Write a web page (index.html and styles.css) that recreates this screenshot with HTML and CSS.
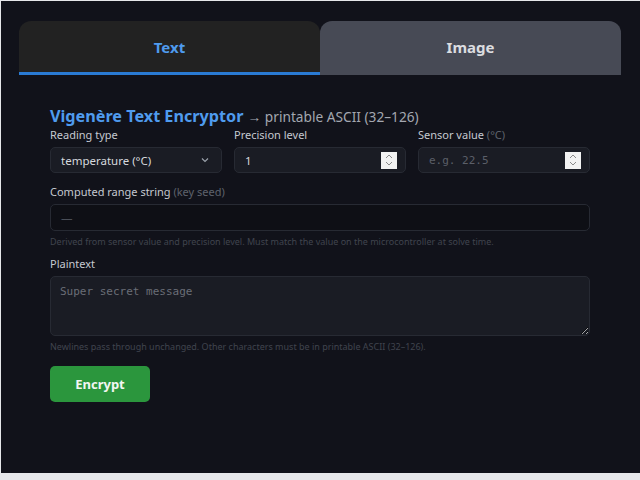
FILE: index.html
```html
<!DOCTYPE html>
<html lang="en">
<head>
  <meta charset="UTF-8">
  <meta name="viewport" content="width=device-width, initial-scale=1.0">
  <title>Vigenère Encryptor</title>
  <link rel="stylesheet" href="styles.css">
</head>
<body>

<div class="frame">
  <div class="tabs">
    <div class="tab active">Text</div>
    <div class="tab">Image</div>
  </div>

  <div class="panel">
    <h2 class="title">Vigenère Text Encryptor <span class="sub">→ printable ASCII (32–126)</span></h2>

    <div class="row">
      <div class="field">
        <label>Reading type</label>
        <div class="box">
          <span class="val">temperature (°C)</span>
          <svg class="chev" width="8" height="6" viewBox="0 0 8 6"><path d="M1 1.5 L4 4.5 L7 1.5" fill="none" stroke="#9aa0aa" stroke-width="1.2"/></svg>
        </div>
      </div>
      <div class="field">
        <label>Precision level</label>
        <div class="box">
          <span class="val">1</span>
          <span class="spin">
            <svg width="10" height="14" viewBox="0 0 10 14"><path d="M2 5 L5 2 L8 5 M2 9 L5 12 L8 9" fill="none" stroke="#8a8a8a" stroke-width="1"/></svg>
          </span>
        </div>
      </div>
      <div class="field">
        <label>Sensor value <span class="dim">(°C)</span></label>
        <div class="box">
          <span class="val mono ph">e.g. 22.5</span>
          <span class="spin">
            <svg width="10" height="14" viewBox="0 0 10 14"><path d="M2 5 L5 2 L8 5 M2 9 L5 12 L8 9" fill="none" stroke="#8a8a8a" stroke-width="1"/></svg>
          </span>
        </div>
      </div>
    </div>

    <div class="field wide">
      <label>Computed range string <span class="dim">(key seed)</span></label>
      <div class="box dark"><span class="val ph2">—</span></div>
      <p class="hint">Derived from sensor value and precision level. Must match the value on the microcontroller at solve time.</p>
    </div>

    <div class="field wide plain">
      <label>Plaintext</label>
      <textarea class="area" placeholder="Super secret message"></textarea>
      <p class="hint">Newlines pass through unchanged. Other characters must be in printable ASCII (32–126).</p>
    </div>

    <button class="btn">Encrypt</button>
  </div>
</div>

</body>
</html>
```

FILE: styles.css
```css
html {
  background: #e6e7ea;
}

body {
  margin: 0;
  font-family: "Noto Sans", sans-serif;
}

.frame {
  margin: 1px 0 0 1px;
  height: 452px;
  padding: 20px 19px 0 18px;
  background: #11121a;
}

.tabs {
  display: flex;
  height: 51px;
  border-bottom: 3px solid #2b2d35;
}

.tab {
  flex: 1;
  display: flex;
  justify-content: center;
  align-items: center;
  font-size: 15px;
  font-weight: bold;
  color: #dcdde0;
  background: #474a55;
  border-radius: 12px 12px 0 0;
  margin-bottom: -3px;
  border-bottom: 3px solid transparent;
  padding-top: 1px;
}

.tab.active {
  background: #222222;
  color: #4f9bee;
  border-bottom-color: #2a7bd4;
}

.panel {
  padding: 33px 31px 0 31px;
}

.title {
  margin: 0;
  font-size: 16.2px;
  font-weight: bold;
  color: #4f9bee;
  line-height: 17px;
}

.sub {
  font-size: 13.7px;
  font-weight: normal;
  color: #a3a7b0;
}

.row {
  display: grid;
  grid-template-columns: 1fr 1fr 1fr;
  column-gap: 12px;
  margin-top: 3px;
}

.field {
  display: flex;
  flex-direction: column;
}

label {
  font-size: 11px;
  color: #c5c9d1;
  line-height: 14px;
  margin-bottom: 5px;
}

.dim {
  color: #5e626c;
}

.box {
  display: flex;
  align-items: center;
  height: 24px;
  padding: 0 10px;
  background: #1a1c24;
  border: 1px solid #272a33;
  border-radius: 5px;
}

.box.dark {
  background: #0e0f15;
  height: 25px;
}

.val {
  flex: 1;
  font-size: 11.5px;
  color: #d6d9de;
}

.mono {
  font-family: "DejaVu Sans Mono", monospace;
}

.ph {
  color: #5b5f68;
  font-size: 11px;
}

.ph2 {
  color: #4a4e57;
}

.chev {
  margin-right: 2px;
}

.spin {
  display: flex;
  justify-content: center;
  align-items: center;
  width: 16px;
  height: 17px;
  background: #f2f2f2;
  margin-right: -2px;
}

.wide {
  margin-top: 12px;
}

.wide.plain {
  margin-top: 9px;
}

.hint {
  margin: 5px 0 0 0;
  font-size: 9px;
  color: #40444e;
  line-height: 12px;
}

.area {
  height: 60px;
  box-sizing: border-box;
  padding: 8px 9px;
  background: #1a1c24;
  border: 1px solid #272a33;
  border-radius: 5px;
  resize: vertical;
  font-family: "DejaVu Sans Mono", monospace;
  font-size: 11px;
  color: #d6d9de;
}

.area::placeholder {
  color: #6a6e77;
}

.btn {
  margin-top: 13px;
  width: 100px;
  height: 36px;
  border: none;
  border-radius: 5px;
  background: #2b963d;
  color: #f2f6f2;
  font-family: "Noto Sans", sans-serif;
  font-size: 13px;
  font-weight: bold;
}
```
